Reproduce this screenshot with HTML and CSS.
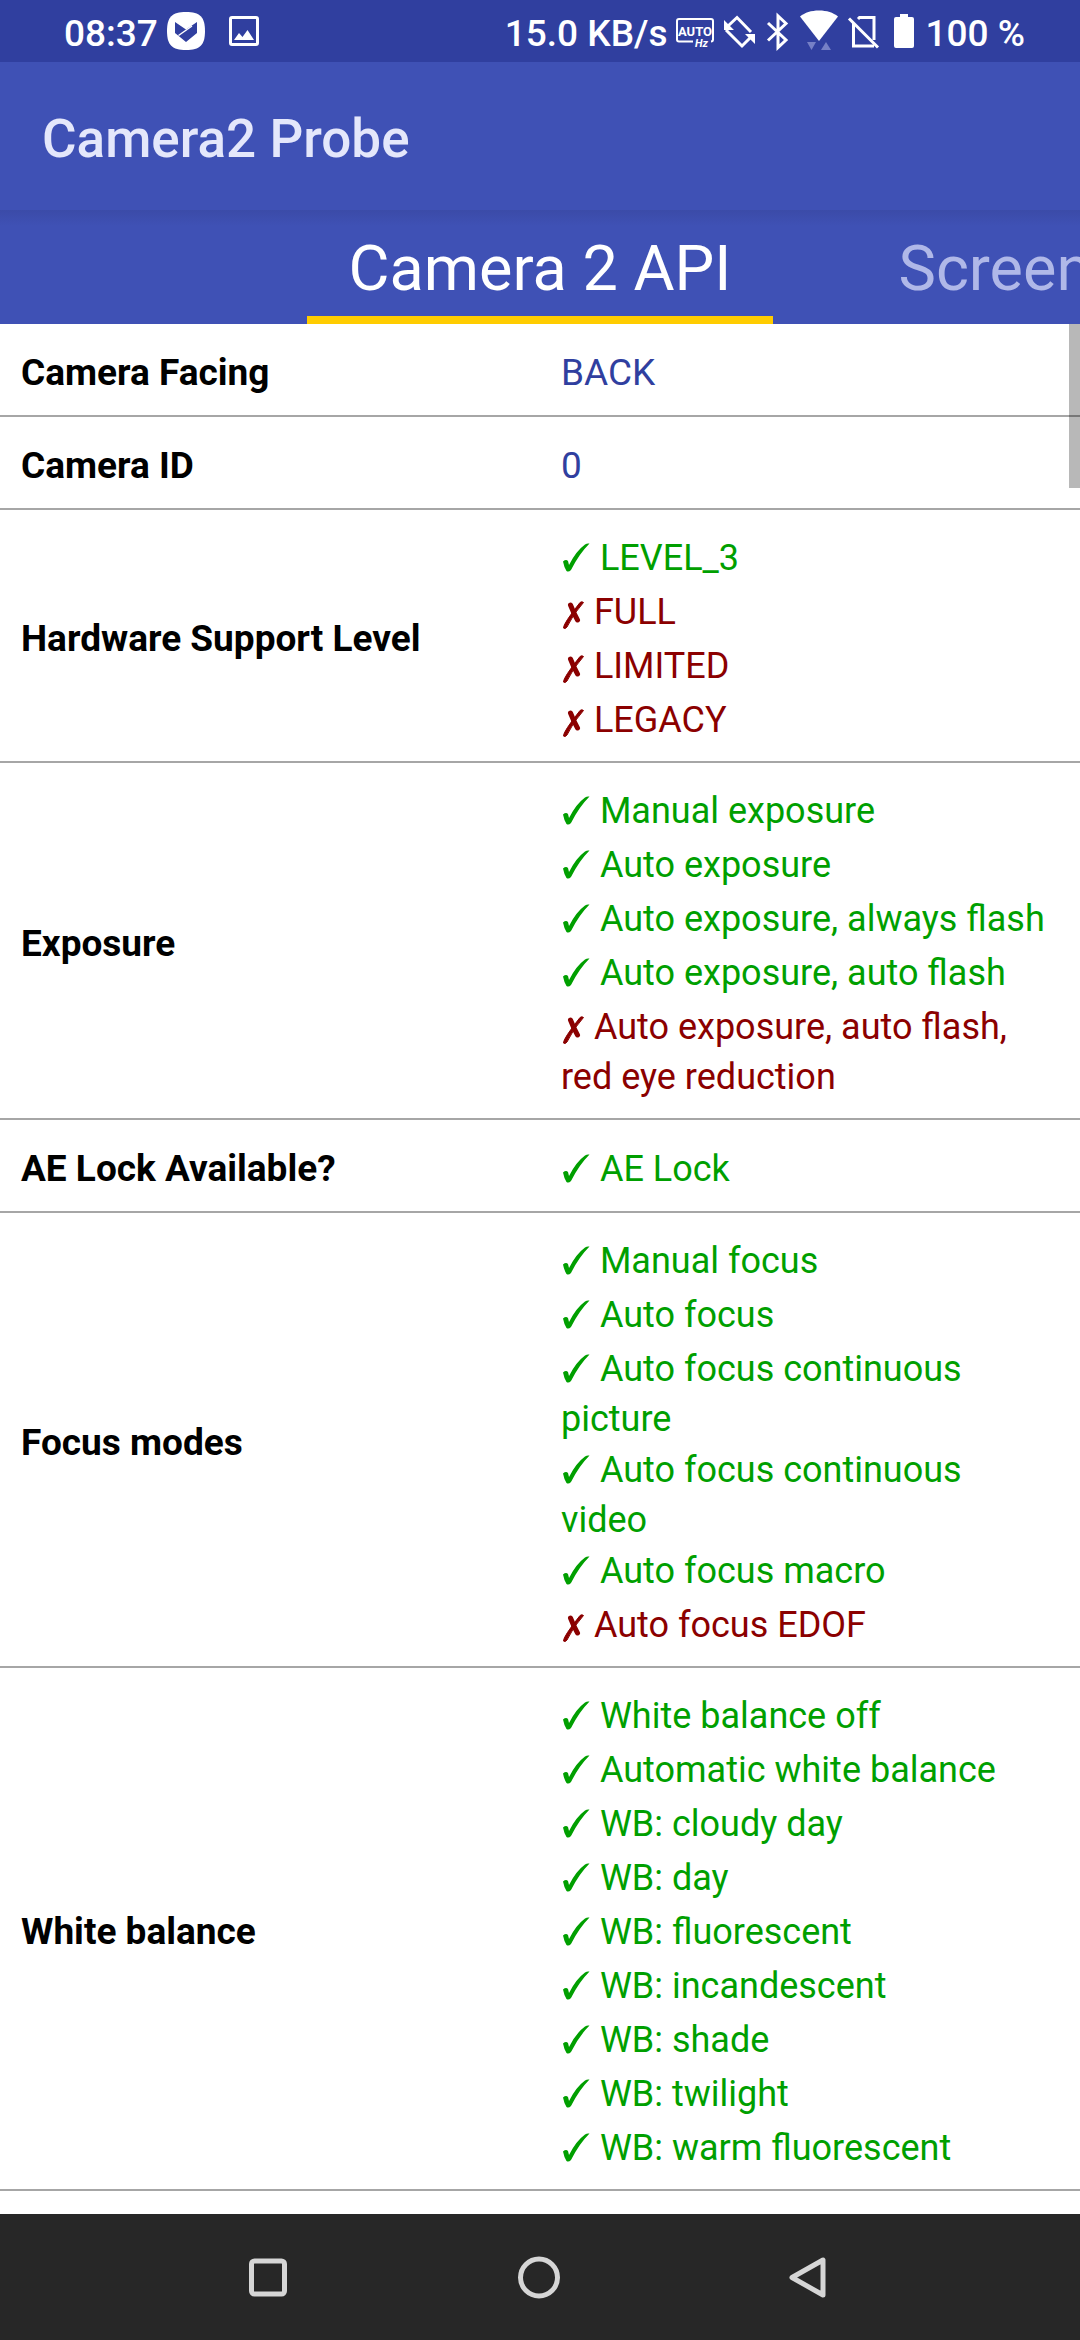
FILE: index.html
```
<!DOCTYPE html>
<html lang="en">
<head>
    <meta charset="UTF-8">
    <meta name="viewport" content="width=device-width, initial-scale=1">
    <title>Camera2 Probe</title>
    <link rel="stylesheet" href="styles.css">
</head>
<body>
    <svg width="0" height="0" class="defs">
        <symbol id="check" viewBox="0 0 30 36">
            <path fill="currentColor" d="M2 21.500Q5 19 7 21L8 25Q15 11 24 4.500Q26 3 28.500 3.500Q18 14 10 30Q7.500 32.500 5.500 31Q3 27 2 21.500z"/>
        </symbol>
        <symbol id="cross" viewBox="0 0 24 36">
            <path fill="none" stroke="currentColor" stroke-width="5" stroke-linecap="round" d="M9.500 11Q13 20 16.500 26"/>
            <path fill="currentColor" stroke="currentColor" stroke-linejoin="round" d="M19 8.500Q21 7 22.500 8.500Q12 20 6 33Q4 35.500 2.500 34Q2 30 19 8.500z"/>
        </symbol>
    </svg>

    <div class="status">
        <div class="group">
            <span>08:37</span>
            <svg width="40" height="40" viewBox="0 0 40 40">
                <path fill="#fff" d="M20 1C34 1 39 6 39 20S34 39 20 39 1 34 1 20 6 1 20 1z"/>
                <path fill="#303f9f" d="M9 11l11 7.500 11-7.500v11L20 31 9 22z"/>
                <path d="M12.500 24.500L26 15" stroke="#fff" stroke-width="1.500"/>
            </svg>
            <svg class="picture" width="32" height="32" viewBox="0 0 32 32">
                <rect x="2.500" y="2.500" width="27" height="27" rx="1.500" fill="none" stroke="#fff" stroke-width="3"/>
                <path fill="#fff" d="M6 25l5-7 3.500 4 5-7L26 25z"/>
            </svg>
        </div>
        <div class="group">
            <span>15.0 KB/s</span>
            <svg width="40" height="40" viewBox="0 0 40 40">
                <path d="M18 30.500H4a2 2 0 0 1-2-2V10a2 2 0 0 1 2-2h32a2 2 0 0 1 2 2v18.500a2 2 0 0 1-2 2" fill="none" stroke="#fff" stroke-width="2"/>
                <text x="20" y="25" class="auto" text-anchor="middle">AUTO</text>
                <text x="20" y="36" class="hz">Hz</text>
            </svg>
            <svg width="36" height="40" viewBox="0 0 36 40">
                <path d="M7 15l9-8.500L30 21M5 19l16 16 9-9" fill="none" stroke="#fff" stroke-width="3"/>
                <path fill="#fff" d="M3 9v10h10zM34 33V23H24z"/>
            </svg>
            <svg width="30" height="40" viewBox="0 0 30 40">
                <path d="M5 12l18 17-8 7.500V5l8 7.500L5 29.500" fill="none" stroke="#fff" stroke-width="3"/>
            </svg>
            <svg width="40" height="44" viewBox="0 0 40 44">
                <path fill="#fff" d="M20 32L1 7.500C6 3.500 12 1.500 20 1.500s14 2 19 6z"/>
                <path fill="#7680c6" d="M8 33h9l-4.500 8zM22 41h10l-5-8z"/>
            </svg>
            <svg width="36" height="40" viewBox="0 0 36 40">
                <path d="M13 8l1.500-1.500H29V29M8.500 12v23H29" fill="none" stroke="#fff" stroke-width="3"/>
                <path d="M4 7.500l29 29" stroke="#fff" stroke-width="3"/>
            </svg>
            <svg width="32" height="40" viewBox="0 0 32 40">
                <path fill="#fff" d="M7 8q0-2 2-2h4V3h8v3h4q2 0 2 2v27q0 2-2 2H9q-2 0-2-2z"/>
            </svg>
            <span>100 %</span>
        </div>
    </div>

    <header class="toolbar">
        <h1>Camera2 Probe</h1>
    </header>

    <nav class="tabs">
        <a href="#camera2" class="tab active">Camera 2 API</a>
        <a href="#screen" class="tab">Screen</a>
    </nav>

    <main id="camera2">
        <table>
            <tr>
                <th scope="row">Camera Facing</th>
                <td>BACK</td>
            </tr>
            <tr>
                <th scope="row">Camera ID</th>
                <td>0</td>
            </tr>
            <tr>
                <th scope="row">Hardware Support Level</th>
                <td>
                    <ul>
                        <li class="yes"><svg><use href="#check"/></svg> LEVEL_3</li>
                        <li class="no"><svg><use href="#cross"/></svg> FULL</li>
                        <li class="no"><svg><use href="#cross"/></svg> LIMITED</li>
                        <li class="no"><svg><use href="#cross"/></svg> LEGACY</li>
                    </ul>
                </td>
            </tr>
            <tr>
                <th scope="row">Exposure</th>
                <td>
                    <ul>
                        <li class="yes"><svg><use href="#check"/></svg> Manual exposure</li>
                        <li class="yes"><svg><use href="#check"/></svg> Auto exposure</li>
                        <li class="yes"><svg><use href="#check"/></svg> Auto exposure, always flash</li>
                        <li class="yes"><svg><use href="#check"/></svg> Auto exposure, auto flash</li>
                        <li class="no"><svg><use href="#cross"/></svg> Auto exposure, auto flash, red eye reduction</li>
                    </ul>
                </td>
            </tr>
            <tr>
                <th scope="row">AE Lock Available?</th>
                <td>
                    <ul>
                        <li class="yes"><svg><use href="#check"/></svg> AE Lock</li>
                    </ul>
                </td>
            </tr>
            <tr>
                <th scope="row">Focus modes</th>
                <td>
                    <ul>
                        <li class="yes"><svg><use href="#check"/></svg> Manual focus</li>
                        <li class="yes"><svg><use href="#check"/></svg> Auto focus</li>
                        <li class="yes"><svg><use href="#check"/></svg> Auto focus continuous picture</li>
                        <li class="yes"><svg><use href="#check"/></svg> Auto focus continuous video</li>
                        <li class="yes"><svg><use href="#check"/></svg> Auto focus macro</li>
                        <li class="no"><svg><use href="#cross"/></svg> Auto focus EDOF</li>
                    </ul>
                </td>
            </tr>
            <tr>
                <th scope="row">White balance</th>
                <td>
                    <ul>
                        <li class="yes"><svg><use href="#check"/></svg> White balance off</li>
                        <li class="yes"><svg><use href="#check"/></svg> Automatic white balance</li>
                        <li class="yes"><svg><use href="#check"/></svg> WB: cloudy day</li>
                        <li class="yes"><svg><use href="#check"/></svg> WB: day</li>
                        <li class="yes"><svg><use href="#check"/></svg> WB: fluorescent</li>
                        <li class="yes"><svg><use href="#check"/></svg> WB: incandescent</li>
                        <li class="yes"><svg><use href="#check"/></svg> WB: shade</li>
                        <li class="yes"><svg><use href="#check"/></svg> WB: twilight</li>
                        <li class="yes"><svg><use href="#check"/></svg> WB: warm fluorescent</li>
                    </ul>
                </td>
            </tr>
        </table>
        <div class="scrollbar"></div>
    </main>

    <div class="navbar">
        <button type="button" aria-label="Recent apps">
            <svg width="48" height="48" viewBox="0 0 48 48"><rect x="5.500" y="8" width="33" height="33" rx="3"/></svg>
        </button>
        <button type="button" aria-label="Home">
            <svg width="48" height="48" viewBox="0 0 48 48"><circle cx="23" cy="24.500" r="18.500"/></svg>
        </button>
        <button type="button" aria-label="Back">
            <svg width="48" height="48" viewBox="0 0 48 48"><path d="M6 24.500L37 7v35z"/></svg>
        </button>
    </div>
</body>
</html>
```

FILE: styles.css
```
* { box-sizing: border-box; }
body {
    margin: 0;
    min-height: 100vh;
    display: flex;
    flex-direction: column;
    font-family: Roboto, sans-serif;
    background: #fff;
    overflow-x: hidden;
}
.defs { position: absolute; }

.status {
    display: flex;
    justify-content: space-between;
    height: 62px;
    padding: 0 53px 0 64px;
    background: #303f9f;
    color: #fff;
    font-size: 37px;
    font-weight: 500;
}
.group { display: flex; align-items: center; gap: 6px; white-space: nowrap; }
.group span { padding: 4px 2px 0 0; }
.picture { margin-left: 16px; }
.auto { font-size: 13px; font-weight: 700; fill: #fff; }
.hz { font-size: 11px; font-weight: 700; font-style: italic; fill: #fff; }

.toolbar {
    display: flex;
    align-items: center;
    height: 148px;
    padding: 6px 42px 0;
    background: #3f51b5;
    color: #e4e7fb;
}
.toolbar h1 { margin: 0; font-size: 53px; font-weight: 500; }

.tabs {
    display: grid;
    grid-template-columns: 1fr auto 1fr;
    height: 114px;
    background: linear-gradient(#3b4ba8, #3f51b5 16px);
    overflow: hidden;
}
.tab {
    height: 114px;
    min-width: 0;
    padding-left: 125px;
    font-size: 63px;
    line-height: 118px;
    color: #b0b8e8;
    text-decoration: none;
    white-space: nowrap;
}
.tab.active {
    grid-column: 2;
    padding: 0 42px;
    color: #fff;
    border-bottom: 8px solid #ffcc00;
}

main { position: relative; flex: 1; }
table {
    width: 100%;
    table-layout: fixed;
    border-collapse: separate;
    border-spacing: 0;
    font-size: 37px;
    line-height: 50px;
}
th, td {
    height: 93px;
    padding: 21px 28px 14px 21px;
    border-bottom: 2px solid #a6a6a6;
    text-align: left;
    vertical-align: middle;
}
th { color: #000; font-weight: 700; }
td { color: #303f9f; }
ul { margin: 0; padding: 2px 0 0; list-style: none; font-size: 36px; }
/* single lines sit a little further apart than wrapped ones */
li { min-height: 54px; padding-bottom: 1px; }
li:last-child { min-height: 52px; padding-bottom: 2px; }
li svg { height: 36px; vertical-align: -6px; }
.yes { color: #009f00; }
.yes svg { width: 30px; }
.no { color: #8b0000; }
.no svg { width: 24px; }

.scrollbar {
    position: absolute;
    top: 0;
    right: 0;
    width: 11px;
    height: 164px;
    background: rgba(0, 0, 0, 0.28);
}

.navbar {
    display: flex;
    justify-content: space-around;
    align-items: center;
    height: 126px;
    padding: 0 12.5%;
    background: #272727;
}
.navbar button { display: flex; padding: 0; border: 0; background: none; }
.navbar svg { fill: none; stroke: #d6d6d6; stroke-width: 5; stroke-linejoin: round; }
```
